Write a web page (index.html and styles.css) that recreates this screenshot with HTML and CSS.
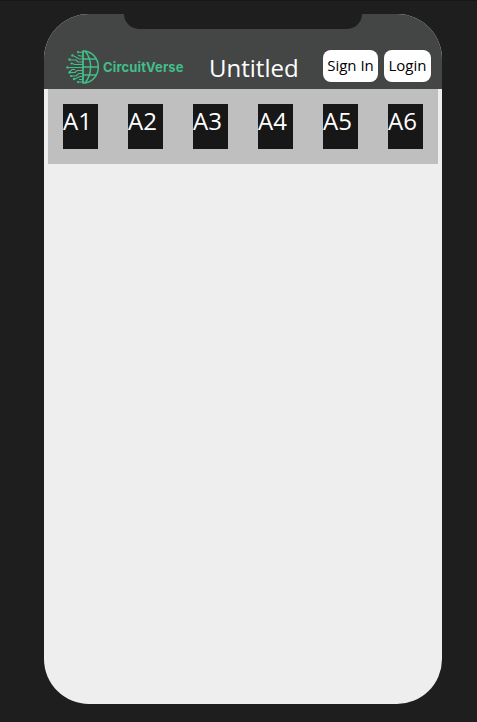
FILE: index.html
```
<!DOCTYPE html>
<html lang="en">
<head>
<meta charset="utf-8">
<title>CircuitVerse</title>
<link rel="stylesheet" href="styles.css">
</head>
<body>
<main class="phone">
  <div class="notch"></div>
  <header class="header">
    <div class="brand">
      <svg class="globe" width="34" height="34" viewBox="0 0 34 34" fill="none" stroke="currentColor">
        <g stroke-width="1.5">
          <path d="M17 1c9 0 15.300 7.500 15.300 16S26 33 17 33"/>
          <path d="M17 .5v33" stroke-width="1.8"/>
          <path d="M19 1c7.500 9 7.500 23 0 32"/>
          <path d="M17 9h13M17 17h15.500M17 25h13"/>
        </g>
        <g stroke-width="1.1">
          <path d="M17 2.200h-5M17 6h-3l-2-1M17 9h-4L8 6M17 12h-5l-2-2H4M17 14.500H9l-3-1M17 17.500H1.500M17 20.500h-6l-2 2H4M17 23.500h-4l-3 2.500H5M17 26.500h-3L9 29M17 29.500h-4M17 32h-5M9 19.500H6l-3 3"/>
        </g>
        <g fill="currentColor" stroke="none">
          <circle cx="12" cy="2.200" r="1.100"/><circle cx="6.500" cy="5.500" r="1.200"/><circle cx="3.500" cy="9.500" r="1.200"/><circle cx="5.500" cy="13.500" r="1.100"/><circle cx="1.500" cy="17.500" r="1.200"/><circle cx="3.500" cy="22.500" r="1.200"/><circle cx="5" cy="26" r="1.100"/><circle cx="8" cy="29" r="1.200"/><circle cx="12" cy="32" r="1.100"/>
        </g>
      </svg>
      <span class="brand-name">CircuitVerse</span>
    </div>
    <h1 class="title">Untitled</h1>
    <button class="button sign-in">Sign In</button>
    <button class="button login">Login</button>
  </header>
  <nav class="toolbar">
    <div class="tool">A1</div>
    <div class="tool">A2</div>
    <div class="tool">A3</div>
    <div class="tool">A4</div>
    <div class="tool">A5</div>
    <div class="tool">A6</div>
  </nav>
</main>
</body>
</html>
```
FILE: styles.css
```
* { box-sizing: border-box; }
body {
  margin: 0;
  height: 722px;
  padding: 13px 35px 18px 44px;
  background: #1e1e1e;
  border-top: 1px solid #171717;
  font-family: "Open Sans", sans-serif;
  overflow: hidden;
}
.phone {
  position: relative;
  width: 398px;
  height: 690px;
  border-radius: 45px;
  background: #eee;
  overflow: hidden;
}
.notch {
  position: absolute;
  top: 0;
  left: 80px;
  width: 238px;
  height: 15px;
  border-radius: 0 0 15px 15px;
  background: #1e1e1e;
}
.header {
  display: flex;
  height: 75px;
  padding: 36px 11px 0 22px;
  background: #444645;
}
.brand {
  display: flex;
  width: 143px;
  color: #42be8a;
}
.globe { flex: none; }
.brand-name {
  margin-left: 3px;
  font: 700 13px/34px Inter, sans-serif;
  letter-spacing: 0.13px;
}
.title {
  width: 114px;
  margin: 0;
  color: #fff;
  font-size: 24px;
  font-weight: 400;
  line-height: 36px;
}
.button {
  height: 32px;
  padding: 0 0 2px;
  border: 0;
  border-radius: 8px;
  background: #fff;
  color: #000;
  font: 15px/30px "Open Sans", sans-serif;
  white-space: nowrap;
}
.sign-in { width: 55px; margin-right: 6px; }
.login { width: 47px; }
.toolbar {
  display: flex;
  gap: 30px;
  height: 75px;
  margin: 0 4px;
  padding: 15px;
  background: #bfbfbf;
}
.tool {
  width: 35px;
  height: 45px;
  background: #171717;
  color: #fff;
  font-size: 24px;
  line-height: 34px;
}
```
